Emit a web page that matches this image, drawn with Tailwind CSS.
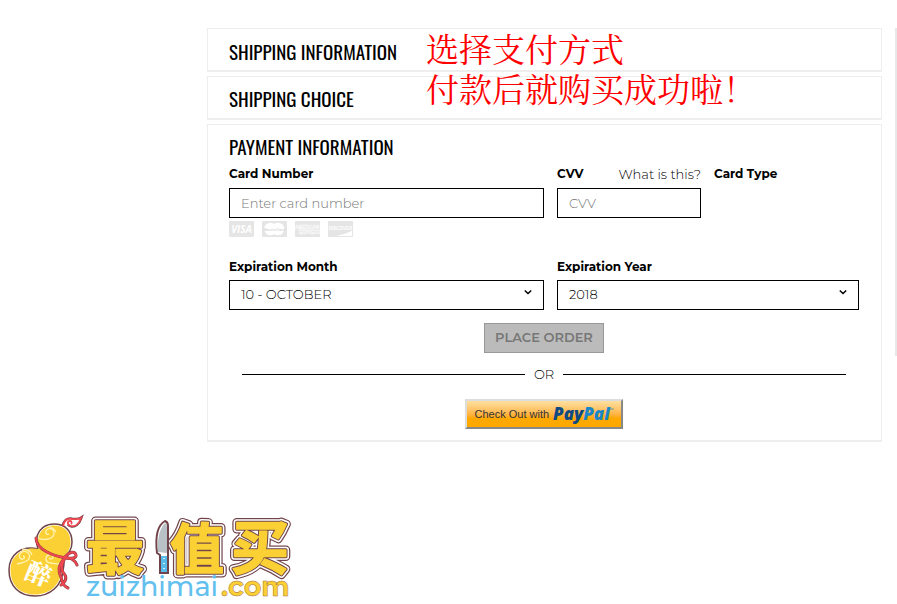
<!DOCTYPE html>
<html lang="en">
<head>
    <meta charset="UTF-8">
    <meta name="viewport" content="width=device-width, initial-scale=1.0">
    <title>Checkout</title>
    <script src="https://cdn.jsdelivr.net/npm/@tailwindcss/browser@4"></script>
</head>
<body class="bg-white text-black font-['Montserrat','Inter','Noto_Sans_CJK_SC',sans-serif] text-[13px] overflow-x-hidden">
    <div class="flex items-start gap-[13px] pl-[207px] pt-7">
        <main class="relative flex-1 flex flex-col gap-1">
            <section class="border border-b-2 border-[#eee] pl-[21px] pr-[22px] pt-2 pb-[5px]">
                <h2 class="font-['Oswald','Roboto_Condensed','Roboto',sans-serif] text-[19px] leading-7">SHIPPING INFORMATION</h2>
            </section>
            <section class="border border-b-2 border-[#eee] pl-[21px] pr-[22px] pt-[7px] pb-[6px]">
                <h2 class="font-['Oswald','Roboto_Condensed','Roboto',sans-serif] text-[19px] leading-7">SHIPPING CHOICE</h2>
            </section>
            <section class="border border-b-2 border-[#eee] pl-[21px] pr-[22px] pt-[7px] pb-[11px]">
                <h2 class="font-['Oswald','Roboto_Condensed','Roboto',sans-serif] text-[19px] leading-7">PAYMENT INFORMATION</h2>
                <form>
                    <div class="grid grid-cols-[315fr_302fr] gap-x-[13px] mt-[2px]">
                        <div>
                            <label for="card-number" class="block text-[12px] font-bold leading-6">Card Number</label>
                            <input type="text" id="card-number" placeholder="Enter card number" class="block w-full h-[30px] mt-[2px] px-[11px] border border-black font-light placeholder:text-[#777]">
                            <div class="flex gap-2 mt-[3px]">
                                <svg class="w-[25px] h-4" viewBox="0 0 25 16">
                                    <rect width="25" height="16" rx="1" fill="#e5e5e5"/>
                                    <text x="12.5" y="12" text-anchor="middle" font-family="Open Sans" font-weight="700" font-style="italic" font-size="10" fill="#fff">VISA</text>
                                </svg>
                                <svg class="w-[25px] h-4" viewBox="0 0 25 16">
                                    <rect width="25" height="16" rx="1" fill="#e5e5e5"/>
                                    <circle cx="8.5" cy="8" r="6.3" fill="#fff"/>
                                    <circle cx="16" cy="8" r="6.3" fill="#fff"/>
                                    <text x="12.3" y="9.7" text-anchor="middle" font-family="Liberation Sans" font-weight="700" font-style="italic" font-size="4" fill="#d8d8d8">MasterCard</text>
                                </svg>
                                <svg class="w-[25px] h-4" viewBox="0 0 25 16">
                                    <rect width="25" height="16" rx="1" fill="#e5e5e5"/>
                                    <g font-family="Liberation Sans" font-weight="700" font-size="4.5" fill="none" stroke="#fff" stroke-width=".3">
                                        <text x="0" y="8">AMERICAN</text>
                                        <text x="4" y="13">EXPRESS</text>
                                    </g>
                                </svg>
                                <svg class="w-[25px] h-4" viewBox="0 0 25 16">
                                    <rect width="25" height="16" rx="1" fill="#e5e5e5"/>
                                    <path d="M24 9.5V15H8Q18 13 24 9.5z" fill="#fff"/>
                                    <text x="12.5" y="8.5" text-anchor="middle" font-family="Liberation Sans" font-weight="700" font-size="4.5" fill="#fff">DISCOVER</text>
                                </svg>
                            </div>
                        </div>
                        <div class="grid grid-cols-[144fr_145fr] gap-x-[13px]">
                            <div>
                                <div class="flex justify-between leading-6">
                                    <label for="cvv" class="text-[12px] leading-6 font-bold">CVV</label>
                                    <a href="#" class="font-light whitespace-nowrap">What is this?</a>
                                </div>
                                <input type="text" id="cvv" placeholder="CVV" class="block w-full h-[30px] mt-[2px] px-[11px] border border-black font-light placeholder:text-[#777]">
                            </div>
                            <div class="text-[12px] font-bold leading-6">Card Type</div>
                        </div>
                    </div>
                    <div class="grid grid-cols-[315fr_302fr] gap-x-[13px] mt-[18px]">
                        <div>
                            <label for="exp-month" class="block text-[12px] font-bold leading-6">Expiration Month</label>
                            <div class="relative mt-px">
                                <select id="exp-month" class="appearance-none block w-full h-[30px] px-[11px] border border-black font-light">
                                    <option>10 - OCTOBER</option>
                                    <option>11 - NOVEMBER</option>
                                    <option>12 - DECEMBER</option>
                                </select>
                                <svg class="absolute right-3 top-2 w-2 h-2 pointer-events-none" viewBox="0 0 8 8"><path d="M.8 2.5L4 5.5l3.2-3" fill="none" stroke="#000" stroke-width="1.5"/></svg>
                            </div>
                        </div>
                        <div>
                            <label for="exp-year" class="block text-[12px] font-bold leading-6">Expiration Year</label>
                            <div class="relative mt-px">
                                <select id="exp-year" class="appearance-none block w-full h-[30px] px-[11px] border border-black font-light">
                                    <option>2018</option>
                                    <option>2019</option>
                                    <option>2020</option>
                                </select>
                                <svg class="absolute right-3 top-2 w-2 h-2 pointer-events-none" viewBox="0 0 8 8"><path d="M.8 2.5L4 5.5l3.2-3" fill="none" stroke="#000" stroke-width="1.5"/></svg>
                            </div>
                        </div>
                    </div>
                    <div class="flex flex-col items-center">
                        <button type="button" disabled class="w-[120px] h-[30px] mt-[13px] bg-[#bbb] border border-[#999] text-[#777] font-semibold whitespace-nowrap">PLACE ORDER</button>
                        <div class="flex items-center self-stretch gap-[9px] px-[13px] mt-[11px] leading-5 font-light">
                            <span class="flex-1 h-px bg-black"></span>
                            <span>OR</span>
                            <span class="flex-1 h-px bg-black"></span>
                        </div>
                        <button type="button" class="flex items-center justify-center gap-1 w-[158px] h-[30px] mt-[15px] border-2 border-t-[#ddd] border-l-[#ddd] border-r-[#888] border-b-[#888] bg-linear-to-b from-[#ffe0a0] to-[#ffa800] to-65% font-['Liberation_Sans',sans-serif] text-[11px] text-[#333] whitespace-nowrap">
                            <span>Check Out with</span>
                            <span class="font-['Open_Sans',sans-serif] text-[17px] leading-5 font-extrabold italic text-[#0f4a82]">Pay<span class="text-[#1a86c8]">Pal</span><sup class="text-[5px] font-normal not-italic text-[#1a86c8] -top-2">™</sup></span>
                        </button>
                    </div>
                </form>
            </section>
            <p class="absolute left-[219px] top-0 font-['Noto_Serif_CJK_SC','Noto_Serif_SC','Noto_Sans_CJK_SC',serif] text-[33px] leading-[40px] text-[#f00] whitespace-nowrap">选择支付方式<br>付款后就购买成功啦！</p>
        </main>
        <aside class="w-[2px] h-[328px] bg-[#e8e8e8]"></aside>
    </div>

    <footer class="mt-[63px]">
        <svg class="block w-[300px] h-[99px]" viewBox="0 0 300 99" role="img" aria-label="最值买 zuizhimai.com">
            <defs>
                <g id="brand" font-family="Noto Sans CJK SC" font-weight="700">
                    <text x="86" y="64" font-size="58">最</text>
                    <text x="170" y="64" font-size="54">值</text>
                    <text x="231" y="64" font-size="58">买</text>
                </g>
            </defs>
            <!-- gourd -->
            <path d="M38 44C33 29 42 19 54 19s18 8 18 18c0 7-3 12-9 16 2 4 1 8 0 12-1 16-13 26-28 26C19 91 9 81 9 65c0-15 12-25 29-21z" fill="#fff" stroke="#70444a" stroke-width="1.5"/>
            <path d="M39 44C35 30 43 20.500 54 20.500s16.500 7 16.500 16.500c0 7-3 12-9 16 2 4 1 8 0 12-1 15-12 24.500-26.500 24.500C20 89.500 10.500 80 10.500 65c0-14 12-24 28.500-21z" fill="#fbd034"/>
            <g fill="none" stroke="#fff2b0" stroke-width="1.3">
                <path d="M38 33q7 3 13 0c6-4 2-11-3-9-4 2-2 7 1 5"/>
                <path d="M48 21q6 2 8 6"/>
                <path d="M17 59q9-2 11-4c4-5-1-10-6-8-4 2-3 8 1 7 2-1 2-3 0-3"/>
                <path d="M22 44q8 0 10 6"/>
                <path d="M59 59c-7-1-14 0-13-6 1-4 7-5 7-1 0 2-3 3-4 1"/>
            </g>
            <!-- stem -->
            <path d="M63 21c1-5 4-8 9-7 4 0 6 1 9-1-2 6-6 9-10 8-4-1-4-5-1-5 2 0 2 2 1 3" fill="#fff" stroke="#70444a" stroke-width="3"/>
            <path d="M63 21c1-5 4-8 9-7 4 0 6 1 9-1-2 6-6 9-10 8-4-1-4-5-1-5 2 0 2 2 1 3" fill="#fff" stroke="#ee4750" stroke-width="1.8"/>
            <!-- ribbon -->
            <g fill="none" stroke-linecap="round">
                <path d="M36 33c0 12 18 18 30 20M65 52c5-6 10-6 11-2 1 3-5 4-11 3M65 53c5-1 10 2 12 7M65 53c-5 8-4 13 0 17 2 3 0 8-4 10M64 54c-6 7-6 12-3 18 1 5 2 9 7 11" stroke="#8c3a40" stroke-width="3"/>
                <path d="M36 33c0 12 18 18 30 20M65 52c5-6 10-6 11-2 1 3-5 4-11 3M65 53c5-1 10 2 12 7M65 53c-5 8-4 13 0 17 2 3 0 8-4 10M64 54c-6 7-6 12-3 18 1 5 2 9 7 11" stroke="#ee4750" stroke-width="2"/>
            </g>
            <text x="-13" y="9" transform="translate(39 69) rotate(22)" font-family="Noto Serif CJK SC, Noto Sans CJK SC" font-weight="900" font-size="25" fill="#fff">醉</text>
            <!-- brand name, outlined from the outside in -->
            <g stroke-linejoin="round">
                <use href="#brand" fill="#70444a" stroke="#70444a" stroke-width="9"/>
                <use href="#brand" fill="#fff" stroke="#fff" stroke-width="6.500"/>
                <use href="#brand" fill="#70444a" stroke="#70444a" stroke-width="3.500"/>
                <use href="#brand" fill="#fbd034" stroke="#fbd034" stroke-width="1.500"/>
            </g>
            <!-- knife -->
            <path d="M157 48C155 31 158 20 165 16q3 1 3 5v47h-8V50z" fill="#fff" stroke="#70444a" stroke-width="2"/>
            <path d="M158 47c-1-14 2-24 7-29q2 1 2 4v26z" fill="#b8c1c6"/>
            <path d="M161 51h6v16h-6z" fill="#57bceb"/>
            <path d="M164 53v1m0 4v1m0 4v1" stroke="#fff" stroke-width="1.5"/>
            <g font-family="Montserrat, DejaVu Sans" font-size="27" font-weight="500">
                <text x="86" y="91" fill="#62bfee">zuizhimai</text>
                <text x="221" y="91" font-weight="700" fill="#fbd034" stroke="#a67546" stroke-width=".5">.com</text>
            </g>
        </svg>
    </footer>
</body>
</html>
